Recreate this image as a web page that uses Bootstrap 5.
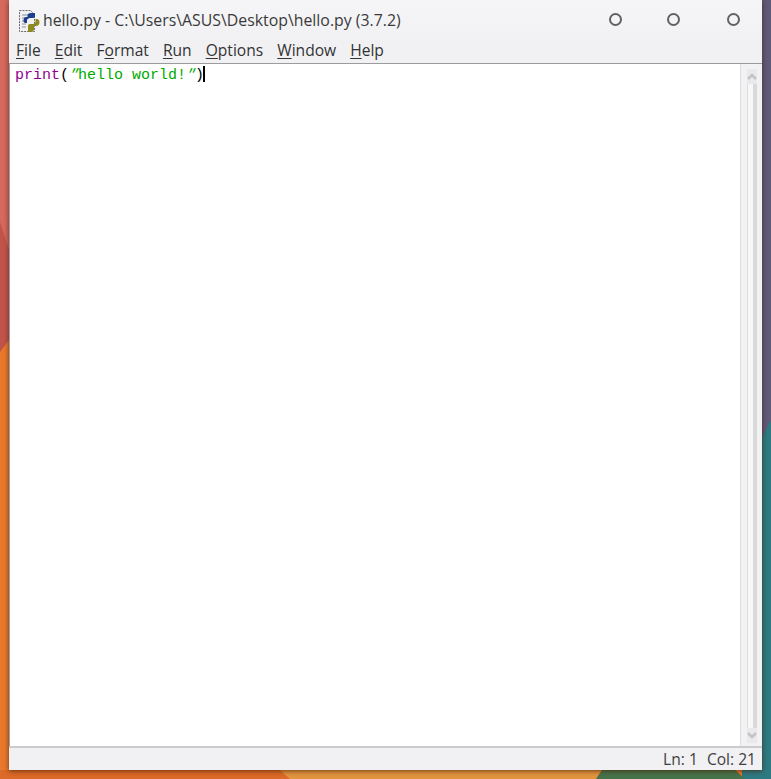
<!doctype html>
<html lang="en">
<head>
<meta charset="utf-8">
<title>hello.py</title>
<link href="https://cdn.jsdelivr.net/npm/bootstrap@5.3.0/dist/css/bootstrap.min.css" rel="stylesheet">
<style>
html,body{height:100%;margin:0;overflow:hidden}
body{position:relative;background:#e87a2c}
.wallpaper{position:absolute;inset:0;width:771px;height:779px}
.idle-window{position:absolute;left:9px;top:0;width:753px;height:770px;background:#f1f1f4;box-shadow:0 1px 5px rgba(70,30,0,.75);display:flex;flex-direction:column;font-family:"Open Sans","Liberation Sans",sans-serif;color:#333}
.title-row{height:40px;padding-left:9px;padding-top:2px;font-size:15.85px;background:linear-gradient(#f6f6f8,#f1f1f4)}
.pyicon{width:22px;height:24px;flex:none;margin-right:3px}
.title-text{color:#3a3a3a;white-space:nowrap}
.win-dots{position:absolute;top:13px;left:0;width:100%;height:14px}
.win-dot{position:absolute;top:0;width:13px;height:13px;border:2px solid #626262;border-radius:50%}
.menu-row{height:23px;padding-left:7px;padding-bottom:2px;font-size:15.6px;gap:14px;color:#333}
.menu-row u{text-underline-offset:2px;text-decoration-thickness:1px}
.edit-row{flex:1;min-height:0;border-top:1px solid #9c9c9c}
.edit-area{flex:1;background:#fff;border-left:1px solid #a0a0a0;padding:2px 0 0 5px;font-family:"Liberation Mono","DejaVu Sans Mono",monospace;font-size:15px;line-height:19px;white-space:pre}
.kw{color:#900090}.st{color:#00aa00}.tx{color:#000}
.qt{display:inline-block;transform:skewX(-22deg)}
.caret-bar{display:inline-block;width:2px;height:16px;background:#000;vertical-align:-3px;margin-left:-1px}
.scroll-rail{width:22px;flex:none;background:#f2f2f4;border-left:1px solid #dedede;padding:5px 5px 3px 6px}
.rail-col{height:100%;width:10px;display:flex;flex-direction:column;align-items:center;background:#e9e9ec}
.rail-arrow{flex:none;height:15px;display:flex;align-items:center;justify-content:center;width:100%}
.rail-track{flex:1;width:100%;display:flex;border-left:1px solid #dcdcdc}
.rail-track i{display:block;flex:1;background:#f7f7f8}
.rail-track b{display:block;width:4px;background:#d9d9d9}
.status-row{height:24px;border-top:2px solid #cbcbcb;font-size:15.6px;padding-right:6px;padding-top:1px;color:#3f3f3f;gap:9px}
</style>
</head>
<body>
<svg class="wallpaper" viewBox="0 0 771 779" preserveAspectRatio="none" aria-hidden="true">
<rect width="771" height="779" fill="#e8792c"/>
<polygon points="0,0 9,0 9,340 0,352" fill="#c2534b"/>
<polygon points="0,0 9,0 9,250 0,222" fill="#d5695d"/>
<polygon points="742,0 771,0 771,779 742,779" fill="#2d7a82"/>
<polygon points="742,0 771,0 771,420 742,475" fill="#5f5a78"/>
<polygon points="0,770 280,770 290,779 0,779" fill="#dc6a28"/>
<polygon points="280,770 602,770 596,779 290,779" fill="#e2953f"/>
<polygon points="602,770 735,770 745,779 596,779" fill="#46734a"/>
</svg>
<div class="idle-window">
  <div class="title-row d-flex align-items-center">
    <svg class="pyicon" viewBox="0 0 22 24" aria-hidden="true">
      <path d="M1.500 1.500h11l4 4v17h-15z" fill="#f1f1f4" stroke="#6a6a6a" stroke-width="1" stroke-dasharray="2 1"/>
      <path d="M4 6h7M4 9h7M4 12h5M4 15h4M4 18h4" stroke="#8d8d9d" stroke-width="1"/>
      <path d="M9 14v-2.500c0-1.500 1-2.500 3-2.500h3c1.200 0 2-.8 2-2V4h-4c-2.500 0-3.500 1-3.500 3v1H8c-1.500 0-2.500 1.500-2.500 3.500S6.500 14 8 14z" fill="#1c3f8f"/>
      <path d="M10 19v-2c0-1.200.8-2 2-2h3c1.500 0 2.500-1 2.500-2.500V10H19c1.500 0 2.500 1.500 2.500 3.500S20 17 18 17h-2v3c0 1.500-1 3-3 3h-2c-1 0-1-1.500-1-4z" fill="#8f8a20"/>
    </svg>
    <span class="title-text">hello.py - C:\Users\ASUS\Desktop\hello.py (3.7.2)</span>
  </div>
  <div class="win-dots">
    <span class="win-dot" style="left:600px"></span>
    <span class="win-dot" style="left:658px"></span>
    <span class="win-dot" style="left:718px"></span>
  </div>
  <div class="menu-row d-flex align-items-center">
    <span><u>F</u>ile</span><span><u>E</u>dit</span><span>F<u>o</u>rmat</span><span><u>R</u>un</span><span><u>O</u>ptions</span><span><u>W</u>indow</span><span><u>H</u>elp</span>
  </div>
  <div class="edit-row d-flex">
    <div class="edit-area"><span class="kw">print</span><span class="tx">(</span><span class="st"><span class="qt">"</span>hello world!<span class="qt">"</span></span><span class="tx">)</span><span class="caret-bar"></span></div>
    <div class="scroll-rail">
      <div class="rail-col">
        <div class="rail-arrow"><svg width="10" height="7" viewBox="0 0 10 7" aria-hidden="true"><path d="M1 6l4-4 4 4" fill="none" stroke="#c4c4c4" stroke-width="2.500"/></svg></div>
        <div class="rail-track"><i></i><b></b></div>
        <div class="rail-arrow"><svg width="10" height="7" viewBox="0 0 10 7" aria-hidden="true"><path d="M1 1l4 4 4-4" fill="none" stroke="#c4c4c4" stroke-width="2.500"/></svg></div>
      </div>
    </div>
  </div>
  <div class="status-row d-flex align-items-center justify-content-end">
    <span>Ln: 1</span><span>Col: 21</span>
  </div>
</div>
<script src="https://cdn.jsdelivr.net/npm/bootstrap@5.3.0/dist/js/bootstrap.bundle.min.js"></script>
</body>
</html>
